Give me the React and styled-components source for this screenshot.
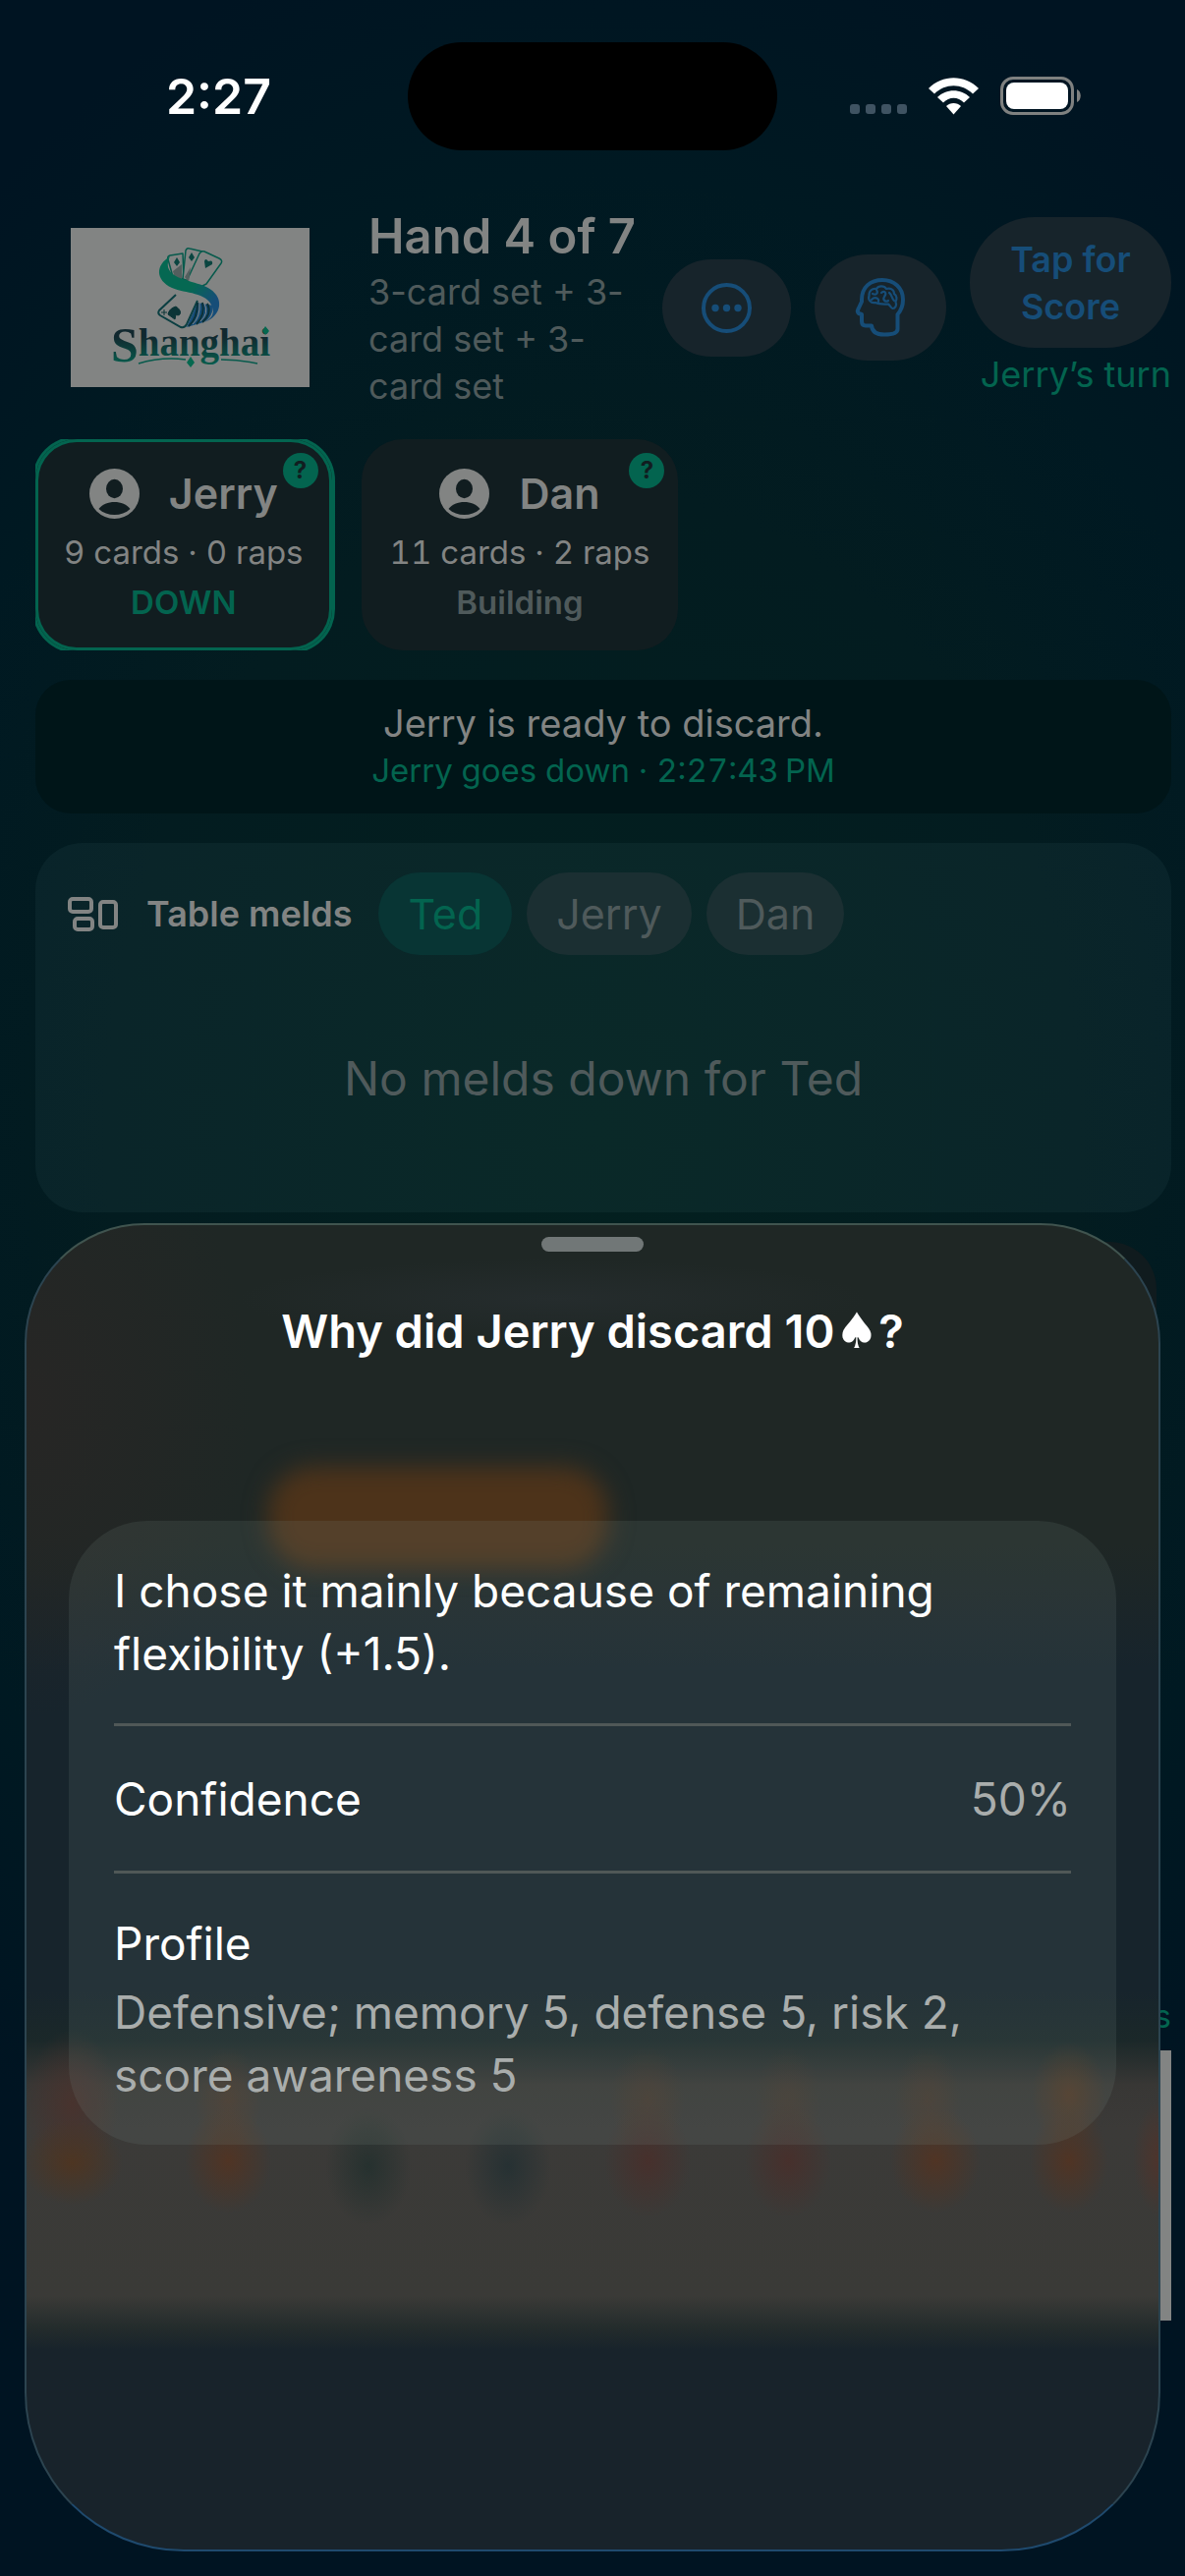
import React from "react";
import styled, { createGlobalStyle } from "styled-components";

const GlobalStyle = createGlobalStyle`
  * { box-sizing: border-box; }
  body {
    margin: 0;
    background: #001422;
    font-family: Inter, "Liberation Sans", sans-serif;
  }
  h1, h2, p { margin: 0; }
  button { font: inherit; border: 0; cursor: pointer; }
  svg { display: block; flex: none; }
`;

const color = {
  dim: "#828483",
  faint: "#4f5a5b",
  blue: "#164d78",
  green: "#03644f",
  pill: "#17242b",
  card: "#111d20",
};

const Screen = styled.div`
  position: relative;
  min-height: 100vh;
  overflow: hidden;
  background: radial-gradient(
    950px 1250px at 50% 1150px,
    #03201f 0,
    #031c20 52%,
    #001922 78%,
    #001422 100%
  );
`;

const StatusBar = styled.header`
  display: grid;
  grid-template-columns: 1fr auto 1fr;
  align-items: center;
  height: 181px;
  padding-top: 14px;
`;

const Clock = styled.time`
  padding-left: 30px;
  text-align: center;
  font-size: 50px;
  font-weight: 600;
  line-height: 60px;
  color: #fff;
`;

const Island = styled.div`
  width: 376px;
  height: 110px;
  border-radius: 55px;
  background: #000;
`;

const StatusIcons = styled.div`
  display: flex;
  align-items: center;
  justify-content: flex-end;
  gap: 22px;
  padding-right: 106px;
`;

const Page = styled.main`
  display: flex;
  flex-direction: column;
  gap: 30px;
  padding: 28px 14px 0 36px;
`;

const HandHeader = styled.section`
  display: flex;
  align-items: center;
  gap: 24px;
  padding-left: 36px;
`;

const HandInfo = styled.div`
  flex: 1;
  min-width: 0;
  margin-left: 36px;
  padding-top: 2px;
`;

const HandTitle = styled.h1`
  margin-bottom: 2px;
  font-size: 49px;
  font-weight: 600;
  line-height: 60px;
  white-space: nowrap;
  color: ${color.dim};
`;

const HandGoal = styled.p`
  font-size: 36px;
  line-height: 48px;
  color: ${color.faint};
`;

const PillButton = styled.button`
  display: grid;
  place-items: center;
  min-width: ${(p) => p.$width}px;
  min-height: ${(p) => p.$height}px;
  padding: 0 38px;
  border-radius: 66px;
  background: ${color.pill};
  color: ${color.blue};
  font-size: 36px;
  font-weight: 600;
  line-height: 48px;
`;

const TurnColumn = styled.div`
  display: flex;
  flex-direction: column;
  align-items: flex-end;
  gap: 3px;
  width: 205px;
`;

const TurnLabel = styled.p`
  font-size: 36px;
  line-height: 48px;
  white-space: nowrap;
  color: ${color.green};
`;

const Players = styled.section`
  display: flex;
  gap: 30px;
  overflow: hidden;
`;

const PlayerCard = styled.article`
  position: relative;
  display: flex;
  flex-direction: column;
  align-items: center;
  gap: 11px;
  padding: 27px 29px 29px;
  border-radius: 42px;
  background: ${color.card};
  box-shadow: ${(p) =>
    p.$active ? `0 0 0 3px ${color.green}, inset 0 0 0 3px ${color.green}` : "none"};
`;

const PlayerName = styled.h2`
  display: flex;
  align-items: center;
  gap: 30px;
  font-size: 43px;
  font-weight: 600;
  line-height: 57px;
  color: ${color.dim};
`;

const PlayerStats = styled.p`
  font-size: 33px;
  font-variant-numeric: tabular-nums;
  line-height: 40px;
  white-space: nowrap;
  color: ${color.dim};
`;

const PlayerState = styled.p`
  font-size: 33px;
  font-weight: 600;
  line-height: 40px;
  color: ${(p) => (p.$down ? color.green : color.faint)};
`;

const HelpBadge = styled.button`
  position: absolute;
  top: 14px;
  right: 14px;
  width: 36px;
  height: 36px;
  padding: 0;
  border-radius: 50%;
  background: ${color.green};
  color: ${color.card};
  font-size: 24px;
  font-weight: 700;
  line-height: 36px;
`;

const Notice = styled.section`
  padding: 20px 18px;
  border-radius: 36px;
  background: #001518;
  text-align: center;
`;

const NoticeText = styled.p`
  font-size: 38px;
  line-height: 48px;
  color: ${color.dim};
`;

const NoticeTime = styled.p`
  font-size: 33px;
  font-variant-numeric: tabular-nums;
  line-height: 48px;
  color: ${color.green};
`;

const Melds = styled.section`
  padding: 30px 33px;
  border-radius: 48px;
  background: rgba(84, 132, 138, 0.09);
`;

const MeldsBar = styled.div`
  display: flex;
  align-items: center;
  gap: 15px;
`;

const MeldsTitle = styled.h2`
  display: flex;
  align-items: center;
  gap: 28px;
  margin-right: 12px;
  font-size: 36px;
  font-weight: 600;
  line-height: 48px;
  white-space: nowrap;
  color: ${color.dim};
`;

const Chip = styled.button`
  height: 84px;
  padding: 0 30px;
  border-radius: 42px;
  background: ${(p) => (p.$selected ? "#083534" : "#1b2f32")};
  color: ${(p) => (p.$selected ? color.green : color.faint)};
  font-size: 43px;
  line-height: 84px;
`;

const MeldsEmpty = styled.p`
  padding: 96px 0 76px;
  text-align: center;
  font-size: 48px;
  line-height: 60px;
  color: ${color.faint};
`;

const TurnPanel = styled.section`
  height: 386px;
  margin: 0 15px 0 36px;
  border-radius: 48px;
  background: #101b1e;
`;

const HandPanel = styled.section`
  padding-top: 348px;
`;

const HandCount = styled.p`
  text-align: right;
  font-size: 33px;
  line-height: 48px;
  color: ${color.green};
`;

const HandStrip = styled.div`
  height: 275px;
  margin-top: 11px;
  background: ${color.dim};
`;

const Sheet = styled.section`
  position: absolute;
  right: 25px;
  bottom: 25px;
  left: 25px;
  display: flex;
  flex-direction: column;
  align-items: center;
  padding: 12px 43px 412px;
  border: 2px solid;
  border-color: #40544f #2c4450 #1f4a6e #2c4450;
  border-radius: 122px 122px 162px 162px;
  overflow: hidden;
  background:
    radial-gradient(52px 44px at 4% 954px, #4d3522 0, transparent 100%),
    radial-gradient(48px 76px at 4% 895px, #48332e 0, transparent 100%),
    radial-gradient(44px 54px at 205px 952px, #503424 0, transparent 100%),
    radial-gradient(44px 60px at 348px 958px, #26312f 0, transparent 100%),
    radial-gradient(44px 60px at 490px 958px, #263133 0, transparent 100%),
    radial-gradient(44px 58px at 632px 952px, #47302c 0, transparent 100%),
    radial-gradient(44px 58px at 775px 952px, #47302c 0, transparent 100%),
    radial-gradient(46px 54px at 925px 952px, #503424 0, transparent 100%),
    radial-gradient(40px 54px at 1061px 952px, #503424 0, transparent 100%),
    radial-gradient(30px 60px at 1156px 950px, #50332a 0, transparent 100%),
    radial-gradient(34px 54px at 205px 890px, rgba(85, 55, 36, 0.5) 0, transparent 100%),
    radial-gradient(38px 54px at 632px 890px, rgba(85, 55, 36, 0.4) 0, transparent 100%),
    radial-gradient(34px 54px at 775px 890px, rgba(85, 55, 36, 0.3) 0, transparent 100%),
    radial-gradient(34px 54px at 917px 890px, rgba(85, 55, 36, 0.4) 0, transparent 100%),
    radial-gradient(38px 54px at 1061px 885px, rgba(95, 58, 30, 0.6) 0, transparent 100%),
    radial-gradient(320px 40px at 535px 75px, #252c2d 0, transparent 100%),
    radial-gradient(230px 320px at 0 180px, #272625 0, rgba(39, 38, 37, 0) 100%),
    linear-gradient(
      #1f2725 0,
      #1f2725 325px,
      #17242c 450px,
      #17242c 780px,
      #1b2829 830px,
      #383735 875px,
      #3b3a38 920px,
      #3a3a37 1090px,
      #242c2c 1122px,
      #18232b 1145px,
      #18232b 100%
    );

  &::before {
    content: "";
    position: absolute;
    top: 246px;
    left: 246px;
    width: 346px;
    height: 104px;
    border-radius: 46px;
    background: #4d331a;
    filter: blur(12px);
  }
`;

const Grabber = styled.div`
  width: 104px;
  height: 15px;
  border-radius: 8px;
  background: #717777;
`;

const SheetTitle = styled.h2`
  margin: 51px 0 163px;
  font-size: 47px;
  font-weight: 600;
  line-height: 60px;
  color: #fff;
`;

const Suit = styled.span`
  font-family: "DejaVu Sans", sans-serif;
  font-size: 50px;
  font-weight: 700;
  line-height: 1;
`;

const Reasons = styled.div`
  position: relative;
  align-self: stretch;
  padding: 0 46px;
  border-radius: 80px;
  background: rgba(125, 152, 144, 0.14);
  font-size: 46px;
  line-height: 64px;
  color: #fff;
`;

const Row = styled.div`
  display: flex;
  flex-direction: ${(p) => (p.$stacked ? "column" : "row")};
  align-items: ${(p) => (p.$stacked ? "stretch" : "center")};
  justify-content: space-between;
  gap: 6px;
  min-height: 150px;
  padding: 39px 0;

  & + & { border-top: 3px solid #505857; }
`;

const ReasonText = styled.p`
  max-width: 920px;
`;

const Muted = styled.p`
  color: #a9adac;
`;

const Signal = () => (
  <svg width="58" height="38" viewBox="0 0 58 38" fill="#3f5362">
    {[0, 16, 32, 48].map((x) => (
      <rect key={x} x={x} y="27" width="10" height="10" rx="3" />
    ))}
  </svg>
);

const Wifi = () => (
  <svg width="51" height="38" viewBox="0 0 51 38" fill="#fff">
    <path d="M0 11 C14 -3.500 37 -3.500 51 11 L45 16.500 C34 5.500 17 5.500 6 16.500 Z" />
    <path d="M9 20 C18 11 33 11 42 20 L36 25.500 C30 19 21 19 15 25.500 Z" />
    <path d="M18 29 C22 25 29 25 33 29 L25.500 37.500 Z" />
  </svg>
);

const Battery = () => (
  <svg width="82" height="39" viewBox="0 0 82 39">
    <rect x="1.500" y="1.500" width="72" height="36" rx="11.500" fill="none" stroke="#7f8180" strokeWidth="3" />
    <rect x="6" y="6" width="63" height="27" rx="8" fill="#fff" />
    <path d="M78 13 C83 15 83 24 78 26 Z" fill="#7f8180" />
  </svg>
);

const More = () => (
  <svg width="51" height="51" viewBox="0 0 51 51" fill="currentColor">
    <circle cx="25.500" cy="25.500" r="23.500" fill="none" stroke="currentColor" strokeWidth="4" />
    <circle cx="14" cy="25.500" r="3.700" />
    <circle cx="25.500" cy="25.500" r="3.700" />
    <circle cx="37" cy="25.500" r="3.700" />
  </svg>
);

const BrainHead = () => (
  <svg width="54" height="60" viewBox="19 19 54 60" fill="none" stroke="currentColor" strokeLinejoin="round" strokeLinecap="round">
    <path
      strokeWidth="4"
      d="M27 41 C27 28 36 21 48 21 C60 21 69 29 69 41 C69 48 67 52 63.500 56 V71 C63.500 75 57 76.500 50 76.500 C42 76.500 37.500 74 37 67.500 H31 C28 67.500 27 66 27 63 V56 L24 55 C22.500 54 22.500 52.500 23.500 50.500 L27 43 Z"
    />
    <g strokeWidth="2.200">
      <path d="M41 44 C36 45 33 41 34.500 37 C34 32 38 29 42 30 C44 26.500 50 26.500 52 30 C56 28.500 60 31 60 35 C63 37 63 41 61.500 43 C63 47 61 50 58.500 50 C57 50 56 47 54 45.500 C49 45.500 45 46 41 44 Z" />
      <path d="M38 35 C42 37 44 34 42 31 M37 41 C40 38 45 39 44 43" />
      <path d="M47 34 C50 31 53 34 50 38 C48 41 51 44 54 42 M55 34 C58 36 57 39 60 42" />
    </g>
  </svg>
);

const Avatar = () => (
  <svg width="51" height="51" viewBox="0 0 51 51">
    <circle cx="25.500" cy="25.500" r="25.500" fill={color.dim} />
    <ellipse cx="25.500" cy="20.500" rx="8.500" ry="9.700" fill={color.card} />
    <path d="M9.500 41 C16 31.500 35 31.500 41.500 41 C33 49 18 49 9.500 41 Z" fill={color.card} />
  </svg>
);

const MeldIcon = () => (
  <svg width="52" height="35" viewBox="0 0 52 35" fill="none" stroke="currentColor" strokeWidth="4">
    <rect x="2" y="2" width="22" height="13" rx="3" />
    <rect x="7" y="22" width="18" height="11" rx="3" />
    <rect x="33" y="5" width="16" height="26" rx="3" />
  </svg>
);

const Logo = () => (
  <svg width="243" height="162" viewBox="0 0 243 162" role="img" aria-label="Shanghai">
    <defs>
      <linearGradient id="ribbon" x1="0" y1="0" x2="1" y2="1">
        <stop offset="0.500" stopColor="#056852" />
        <stop offset="0.800" stopColor="#164d78" />
      </linearGradient>
      <linearGradient id="word" x1="0" y1="0" x2="0" y2="1">
        <stop offset="0.350" stopColor="#11282f" />
        <stop offset="0.900" stopColor="#05604f" />
      </linearGradient>
    </defs>
    <rect width="243" height="162" fill="#828483" />
    <g fill="#828483" stroke="#075a4c" strokeWidth="1.500" strokeLinejoin="round">
      <path d="M115 52 L114 26 L101 28 Q98 29 99 32 L104 50 Z" />
      <path d="M114 52 L117 23 Q118 20 121 21 L134 24 L124 55 Z" />
      <path d="M118 54 L131 26 Q133 23 136 24 L151 31 Q155 33 153 36 L138 57 L128 62 Z" />
    </g>
    <path d="M104 44 L113 37 V54 L106 51 Z M116 50 L122 40 L120 55 Z" fill="#535f5e" />
    <g fill="#0a4540">
      <path d="M108 30 L111 35 L108 39 L105 35 Z M123 25 L126 30 L123 34 L120 30 Z" />
      <path d="M137 41 L136 34 Q137 30 140 34 Q145 32 144 37 Z" />
    </g>
    <path d="M107 68 L90 84 Q88 87 91 89 L112 101 Q116 102 118 98 L129 74" fill="#828483" stroke="#0b3f42" strokeWidth="2" />
    <path d="M129 76 L145 79 Q144 94 132 97 L118 101 Z" fill="#164d78" />
    <path d="M129 76 Q129 92 120 100 M134 76 Q137 88 128 98 M139 77 Q144 87 134 96" fill="none" stroke="#0c3138" strokeWidth="2" />
    <path d="M131 76 Q132 91 124 98 M136 77 Q141 87 132 95" fill="none" stroke="#828483" strokeWidth="1" />
    <path d="M101 29 C86 38 86 53 103 61 C117 67 138 65 144 80 C147 88 142 93 136 96 C150 91 155 78 148 68 C140 56 119 56 107 49 C98 44 97 37 101 29 Z" fill="url(#ribbon)" />
    <path d="M106 93 L99 88 Q100 82 107 80 Q113 84 111 88 Q109 90 107 88 Z M95 83 V89 M92 86 H98" fill="#0b3436" stroke="#0b3436" strokeWidth="1" />
    <text x="122" y="130" textAnchor="middle" fontFamily="'Liberation Serif', serif" fontSize="39" fontWeight="700" fill="url(#word)">
      <tspan fontSize="50" dy="6">S</tspan>
      <tspan dy="-6">hanghai</tspan>
    </text>
    <path d="M69 138 Q92 131 117 134 M153 134 Q172 134 190 138" fill="none" stroke="#075a4c" strokeWidth="1.500" />
    <path d="M122 131 L126 137 L122 142 L118 137 Z M198 100 L202 105 L198 109 L195 105 Z" fill="#05684f" />
  </svg>
);

const players = [
  { name: "Jerry", stats: "9 cards · 0 raps", state: "DOWN", down: true },
  { name: "Dan", stats: "11 cards · 2 raps", state: "Building", down: false },
];

export default function App() {
  return (
    <Screen>
      <GlobalStyle />
      <StatusBar>
        <Clock>2:27</Clock>
        <Island />
        <StatusIcons>
          <Signal />
          <Wifi />
          <Battery />
        </StatusIcons>
      </StatusBar>

      <Page>
        <HandHeader>
          <Logo />
          <HandInfo>
            <HandTitle>Hand 4 of 7</HandTitle>
            <HandGoal>3-card set + 3-card set + 3-card set</HandGoal>
          </HandInfo>
          <PillButton $width={131} $height={99} aria-label="More">
            <More />
          </PillButton>
          <PillButton $width={134} $height={108} aria-label="Strategy">
            <BrainHead />
          </PillButton>
          <TurnColumn>
            <PillButton $width={205} $height={133}>Tap for Score</PillButton>
            <TurnLabel>Jerry’s turn</TurnLabel>
          </TurnColumn>
        </HandHeader>

        <Players>
          {players.map((p) => (
            <PlayerCard key={p.name} $active={p.down}>
              <PlayerName>
                <Avatar />
                {p.name}
              </PlayerName>
              <PlayerStats>{p.stats}</PlayerStats>
              <PlayerState $down={p.down}>{p.state}</PlayerState>
              <HelpBadge>?</HelpBadge>
            </PlayerCard>
          ))}
        </Players>

        <Notice>
          <NoticeText>Jerry is ready to discard.</NoticeText>
          <NoticeTime>Jerry goes down · 2:27:43{"\u202f"}PM</NoticeTime>
        </Notice>

        <Melds>
          <MeldsBar>
            <MeldsTitle>
              <MeldIcon />
              Table melds
            </MeldsTitle>
            <Chip $selected>Ted</Chip>
            <Chip>Jerry</Chip>
            <Chip>Dan</Chip>
          </MeldsBar>
          <MeldsEmpty>No melds down for Ted</MeldsEmpty>
        </Melds>

        <TurnPanel />
        <HandPanel>
          <HandCount>s</HandCount>
          <HandStrip />
        </HandPanel>
      </Page>

      <Sheet role="dialog" aria-labelledby="sheet-title">
        <Grabber />
        <SheetTitle id="sheet-title">
          Why did Jerry discard 10<Suit>♠</Suit>?
        </SheetTitle>
        <Reasons>
          <Row>
            <ReasonText>I chose it mainly because of remaining flexibility (+1.5).</ReasonText>
          </Row>
          <Row>
            <p>Confidence</p>
            <Muted>50%</Muted>
          </Row>
          <Row $stacked>
            <p>Profile</p>
            <Muted>Defensive; memory 5, defense 5, risk 2, score awareness 5</Muted>
          </Row>
        </Reasons>
      </Sheet>
    </Screen>
  );
}
